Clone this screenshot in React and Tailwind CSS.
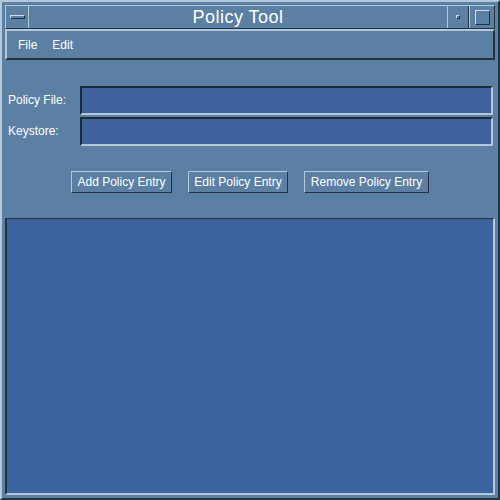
export default function App() {
  const font = { fontFamily: '"Liberation Sans", Arial, sans-serif' };

  return (
    <div
      className="w-[500px] h-[500px] bg-[#5b80a4] border-2 border-t-[#b4c8dc] border-l-[#b4c8dc] border-r-[#24343f] border-b-[#24343f] p-[3px] flex flex-col text-white"
      style={font}
    >
      {/* title bar */}
      <div className="h-[24px] flex border border-t-[#b4c8dc] border-l-[#b4c8dc] border-r-[#24343f] border-b-[#24343f]">
        <div className="w-[23px] flex items-center justify-center border-r border-r-[#b4c8dc]">
          <div className="w-[15px] h-[4px] border border-t-[#d0dce8] border-l-[#d0dce8] border-r-[#24343f] border-b-[#24343f]" />
        </div>
        <div className="flex-1 flex items-center justify-center text-[18px] leading-none tracking-[0.5px]">
          Policy Tool
        </div>
        <div className="w-[22px] flex items-center justify-center border-l border-l-[#b4c8dc] border-r border-r-[#24343f]">
          <div className="w-[4px] h-[4px] border border-t-[#d0dce8] border-l-[#d0dce8] border-r-[#24343f] border-b-[#24343f]" />
        </div>
        <div className="w-[25px] flex items-center justify-center border-l border-l-[#b4c8dc]">
          <div className="w-[15px] h-[15px] border border-t-[#d0dce8] border-l-[#d0dce8] border-r-[#24343f] border-b-[#24343f]" />
        </div>
      </div>

      {/* menu bar */}
      <div className="h-[31px] flex items-center gap-[15px] px-[11px] text-[12px] border-2 border-t-[#b4c8dc] border-l-[#b4c8dc] border-r-[#24343f] border-b-[#24343f]">
        <span>File</span>
        <span>Edit</span>
      </div>

      {/* form panel */}
      <div className="h-[158px] flex flex-col pl-[3px] pr-[2px] pt-[25px] text-[12px]">
        <div className="flex items-center h-[30px]">
          <span className="w-[72px]">Policy File:</span>
          <div className="flex-1 h-[29px] bg-[#3f619c] border-2 border-t-[#1c2a36] border-l-[#1c2a36] border-r-[#b4c8dc] border-b-[#b4c8dc]" />
        </div>
        <div className="flex items-center h-[30px] mt-[1px]">
          <span className="w-[72px]">Keystore:</span>
          <div className="flex-1 h-[29px] bg-[#3f619c] border-2 border-t-[#1c2a36] border-l-[#1c2a36] border-r-[#b4c8dc] border-b-[#b4c8dc]" />
        </div>
        <div className="flex mt-[25px] pl-[63px] gap-[16px] text-[12px]">
          <button className="w-[101px] h-[22px] border border-t-[#b4c8dc] border-l-[#b4c8dc] border-r-[#24343f] border-b-[#24343f] flex items-center justify-center">
            Add Policy Entry
          </button>
          <button className="w-[100px] h-[22px] border border-t-[#b4c8dc] border-l-[#b4c8dc] border-r-[#24343f] border-b-[#24343f] flex items-center justify-center">
            Edit Policy Entry
          </button>
          <button className="w-[125px] h-[22px] border border-t-[#b4c8dc] border-l-[#b4c8dc] border-r-[#24343f] border-b-[#24343f] flex items-center justify-center">
            Remove Policy Entry
          </button>
        </div>
      </div>

      {/* list area */}
      <div className="flex-1 bg-[#3c62a0] border-t border-l-2 border-r-2 border-b-2 border-t-[#24343f] border-l-[#24343f] border-r-[#b4c8dc] border-b-[#b4c8dc]" />
    </div>
  );
}
